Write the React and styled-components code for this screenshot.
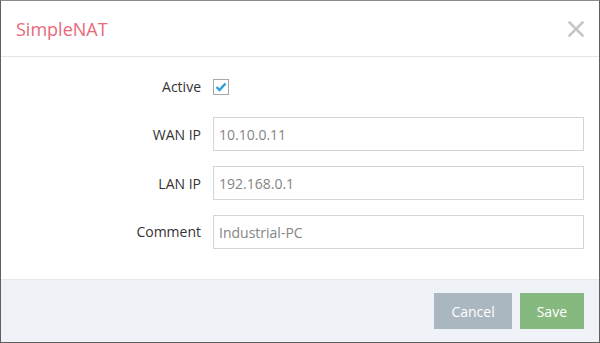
import React from "react";
import styled, { createGlobalStyle } from "styled-components";

const GlobalStyle = createGlobalStyle`
  html, body {
    margin: 0;
    padding: 0;
    background: #6b6b6b;
  }
  * {
    box-sizing: border-box;
  }
`;

const Dialog = styled.div`
  width: 600px;
  height: 343px;
  display: flex;
  flex-direction: column;
  background: #fff;
  border: 1px solid #5f5f5f;
  border-top-color: #8a8a8a;
  font-family: "Open Sans", "Liberation Sans", sans-serif;
  color: #333;
  overflow: hidden;
`;

const Header = styled.div`
  height: 56px;
  flex: none;
  display: flex;
  align-items: center;
  justify-content: space-between;
  padding: 0 15px 0 15px;
  border-bottom: 1px solid #e5e5e5;
`;

const Title = styled.h4`
  margin: 0;
  font-size: 18px;
  font-weight: 400;
  color: #e8697a;
`;

const CloseButton = styled.button`
  border: 0;
  background: none;
  padding: 0;
  width: 16px;
  height: 16px;
  display: flex;
  cursor: pointer;
`;

const Body = styled.div`
  flex: 1;
  padding: 13px 15px 0 0;
`;

const Form = styled.div`
  display: grid;
  grid-template-columns: 200px 1fr;
  column-gap: 12px;
  row-gap: 15px;
`;

const Label = styled.label`
  justify-self: end;
  align-self: center;
  font-size: 14px;
  color: #333;
  margin-top: ${(p) => (p.$up ? "-2px" : "0")};
`;

const Field = styled.div`
  height: ${(p) => (p.$short ? "32px" : "34px")};
  display: flex;
  align-items: center;
`;

const Input = styled.input`
  width: 100%;
  height: 34px;
  border: 1px solid #d5d5d5;
  padding: 0 5px;
  font-family: inherit;
  font-size: 14px;
  color: #858585;
  outline: none;
  background: #fff;
`;

const CheckBox = styled.span`
  width: 16px;
  height: 16px;
  margin-top: 1px;
  border: 1px solid #a8a8a8;
  display: flex;
  align-items: center;
  justify-content: center;
  background: #fff;
`;

const Footer = styled.div`
  height: 63px;
  flex: none;
  display: flex;
  justify-content: flex-end;
  align-items: flex-start;
  gap: 8px;
  padding: 13px 15px 0 0;
  background: #eff3f8;
  border-top: 1px solid #e4e9ee;
`;

const Button = styled.button`
  height: 36px;
  padding: 0 17px;
  border: 0;
  font-family: inherit;
  font-size: 14px;
  color: #fff;
  background: ${(p) => p.$bg};
  cursor: pointer;
`;

const rows = [
  { label: "WAN IP", value: "10.10.0.11" },
  { label: "LAN IP", value: "192.168.0.1" },
  { label: "Comment", value: "Industrial-PC", up: true },
];

export default function App() {
  return (
    <>
      <GlobalStyle />
      <Dialog>
        <Header>
          <Title>SimpleNAT</Title>
          <CloseButton aria-label="close">
            <svg width="16" height="16" viewBox="0 0 16 16">
              <path
                d="M1.5 1.5 L14.5 14.5 M14.5 1.5 L1.5 14.5"
                stroke="#c6c6c6"
                strokeWidth="2.6"
                strokeLinecap="square"
              />
            </svg>
          </CloseButton>
        </Header>
        <Body>
          <Form>
            <Label>Active</Label>
            <Field $short>
              <CheckBox>
                <svg width="12" height="10" viewBox="0 0 12 10">
                  <path
                    d="M1.5 5 L4.5 8 L10.5 1.5"
                    fill="none"
                    stroke="#2a9ed8"
                    strokeWidth="2.4"
                  />
                </svg>
              </CheckBox>
            </Field>
            {rows.map((r) => (
              <React.Fragment key={r.label}>
                <Label $up={r.up}>{r.label}</Label>
                <Field>
                  <Input defaultValue={r.value} />
                </Field>
              </React.Fragment>
            ))}
          </Form>
        </Body>
        <Footer>
          <Button $bg="#abb7c0">Cancel</Button>
          <Button $bg="#86b97f">Save</Button>
        </Footer>
      </Dialog>
    </>
  );
}
